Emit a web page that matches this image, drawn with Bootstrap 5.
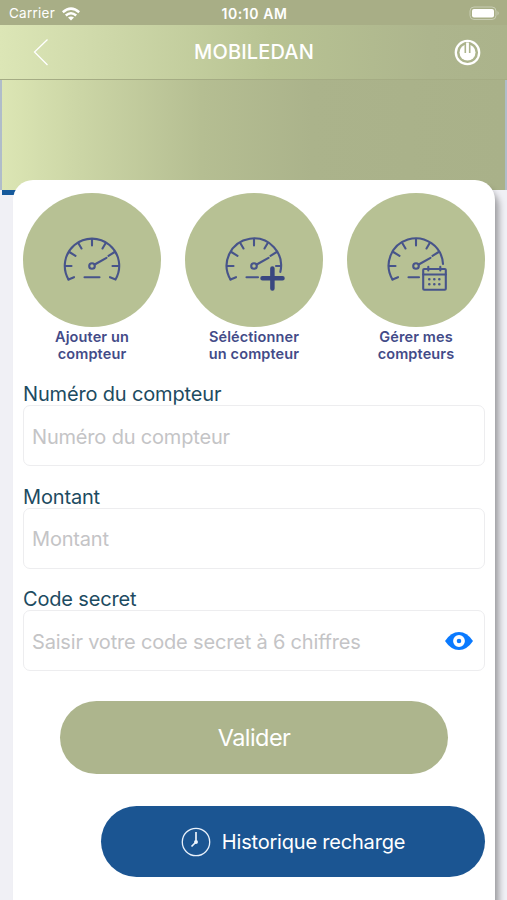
<!DOCTYPE html>
<html lang="fr">
<head>
<meta charset="utf-8">
<meta name="viewport" content="width=device-width, initial-scale=1">
<title>MOBILEDAN</title>
<link href="https://cdn.jsdelivr.net/npm/bootstrap@5.3.0/dist/css/bootstrap.min.css" rel="stylesheet">
<style>
body{font-family:Inter,"Liberation Sans",sans-serif;background:#f0f0f5;height:900px;overflow:hidden}
.status{height:25px;background:#a8ae86;color:#fff;font-size:13.5px;line-height:27px;padding:0 7px 0 9px;display:grid;grid-template-columns:1fr auto 1fr}
.status .carrier{letter-spacing:.25px}
.status .wifi{margin-left:7px}
.status .hour{font-weight:600;font-size:14px;letter-spacing:.55px;line-height:27px}
.topbar{height:55px;background:linear-gradient(90deg,#dce6b6 0,#d0daab 90px,#b8c393 270px,#adb58d 430px,#abb38b);border-bottom:1px solid #a5ac84;padding:0 26px 0 33px}
.topbar h1{font-size:20px;font-weight:500;color:#fff;letter-spacing:.15px;padding-left:5px}
.hero{height:110px;background:linear-gradient(90deg,#dce6b4 0,#ccd6a6 75px,#b5be92 200px,#abb38b 310px,#a9b189);border:solid #b0bdca;border-width:0 2px}
.hero-foot{height:5px;width:16px;margin-left:2px;background:#15599b}
.sheet{margin:-15px 12px 0 13px;height:740px;border-radius:20px 20px 0 0;padding:13px 10px 0;box-shadow:5px 7px 6px -1px rgba(0,0,0,.34);position:relative}
.tiles{gap:24px;margin-bottom:17px}
.tile{width:138px;color:#434b88;font-size:14.5px;font-weight:600;line-height:17px;letter-spacing:.13px}
.disc{width:138px;height:134px;border-radius:50%;background:#b7c194;margin-bottom:1px}
.disc svg{display:block}
.field-label{height:26px;line-height:30px;font-size:20px;color:#1d4b61;letter-spacing:-.16px}
.field-box{height:61px;border:1.5px solid #ededef;border-radius:7px;font-size:20px;color:#c4c4c6;padding:2px 11px 0 8px;letter-spacing:-.18px}
.field-box svg{margin-top:-2px}
.field-gap{margin-bottom:15.5px}
.go{width:388px;height:73px;margin:30px 0 0 37px;background:#adb58d;color:#fff;font-size:23.5px;letter-spacing:-.55px}
.past{width:384px;height:71px;margin:32px 0 0 78px;background:#1b5592;color:#fff;font-size:20px;gap:11px;letter-spacing:-.2px}
</style>
<script src="https://cdn.jsdelivr.net/npm/bootstrap@5.3.0/dist/js/bootstrap.bundle.min.js"></script>
</head>
<body>
<svg width="0" height="0" class="d-block">
  <defs>
    <g id="dial" fill="none" stroke="#47548a" stroke-width="2.1" stroke-linecap="round">
      <path d="M48.5 73H42M52.5 62.8L46.3 59M58.5 55.5L55.4 50.3M69 52.500V46M79.500 55.500L82.600 50.300M85.500 62.800L91.700 59"/>
      <circle cx="69" cy="73" r="2.8"/><path d="M71.700 71.500L83.500 64.800M51 84.200L45.500 86.500"/>
    </g>
  </defs>
</svg>
<div class="status">
  <div class="d-flex align-items-center"><span class="carrier">Carrier</span>
    <svg class="wifi" width="18" height="14" viewBox="0 0 18 14" fill="none" stroke="#fff" stroke-width="2.5"><path d="M.8 5.200Q9-2 17.200 5.200M3.800 8.500Q9 4 14.200 8.500"/><path d="M9 13.600L6 10.600Q9 8.200 12 10.600Z" fill="#fff" stroke="none"/></svg>
  </div>
  <div class="hour">10:10 AM</div>
  <div class="d-flex justify-content-end align-items-center"><svg width="31" height="15" viewBox="0 0 31 15"><rect x="1" y="1" width="26" height="12.500" rx="4" fill="none" stroke="#c8cdb3"/><rect x="3" y="3" width="22" height="8.500" rx="2" fill="#fff"/><path d="M28.500 5Q31 7.200 28.500 9.500Z" fill="#c8cdb3"/></svg></div>
</div>
<nav class="topbar d-flex align-items-center justify-content-between">
  <svg width="16" height="28" viewBox="0 0 16 28" fill="none" stroke="#fff" stroke-width="1.300"><path d="M14.500 1.500L1.500 14L14.500 27"/></svg>
  <h1 class="m-0">MOBILEDAN</h1>
  <svg width="27" height="27" viewBox="0 0 27 27"><circle cx="13.500" cy="13.500" r="11.700" fill="none" stroke="#fff" stroke-width="2.300"/><circle cx="13.500" cy="13.500" r="8" fill="#fff"/><path d="M13.500 3V14" stroke="#adb58d" stroke-width="6"/><path d="M13.500 3.500V14.500" stroke="#fff" stroke-width="2.800"/></svg>
</nav>
<div class="hero"></div>
<div class="hero-foot"></div>
<main class="sheet bg-white">
  <div class="tiles d-flex text-center">
    <div class="tile"><div class="disc"><svg width="138" height="134"><use href="#dial"/><path d="M45.500 86.500A27.200 27.200 0 1 1 92.500 86.500L87 84.200M89.500 73H96M61.500 84.200H76.500" fill="none" stroke="#47548a" stroke-width="2.100" stroke-linecap="round"/></svg></div>Ajouter un<br>compteur</div>
    <div class="tile"><div class="disc"><svg width="138" height="134"><use href="#dial"/><path d="M45.500 86.500A27.200 27.200 0 1 1 95.300 79M91 73H96M61.500 84.200H73" fill="none" stroke="#47548a" stroke-width="2.100" stroke-linecap="round"/><path d="M77.500 85.300H97.500M87.400 75.500V95.500" stroke="#394780" stroke-width="4.500" stroke-linecap="round"/></svg></div>Séléctionner<br>un compteur</div>
    <div class="tile"><div class="disc"><svg width="138" height="134"><use href="#dial"/><g fill="none" stroke="#47548a" stroke-width="2.100" stroke-linecap="round"><path d="M45.500 86.500A27.200 27.200 0 1 1 96 71M61.500 84.200H72M76.200 81.500H98.800M81.300 73.800V77.500M93.300 73.800V77.500"/><rect x="76.200" y="76" width="22.600" height="20.800" rx="1"/><path d="M82.300 86.300h.01m5 0h.01m5 0h.01M82.300 91.300h.01m5 0h.01m5 0h.01" stroke-width="2.600"/></g></svg></div>Gérer mes<br>compteurs</div>
  </div>
  <div class="field-label">Numéro du compteur</div>
  <div class="field-box field-gap d-flex align-items-center">Numéro du compteur</div>
  <div class="field-label">Montant</div>
  <div class="field-box field-gap d-flex align-items-center">Montant</div>
  <div class="field-label">Code secret</div>
  <div class="field-box d-flex align-items-center justify-content-between"><span>Saisir votre code secret à 6 chiffres</span>
    <svg width="28" height="18" viewBox="0 0 28 18"><path d="M0 9Q6 0 14 0T28 9Q22 18 14 18T0 9Z" fill="#0a7aff"/><circle cx="14" cy="9" r="4.100" fill="none" stroke="#fff" stroke-width="3.600"/></svg></div>
  <button class="go btn rounded-pill border-0 d-block p-0" type="button">Valider</button>
  <button class="past btn rounded-pill border-0 d-flex align-items-center justify-content-center p-0" type="button"><svg width="30" height="30" viewBox="0 0 30 30" fill="none" stroke="#e9f1fb" stroke-width="1.300"><circle cx="15" cy="15" r="13.700"/><path d="M15 5V15L10.500 19.500" stroke-width="1.700"/><circle cx="15" cy="15" r="1.300" fill="#fff"/></svg><span>Historique recharge</span></button>
</main>
</body>
</html>
